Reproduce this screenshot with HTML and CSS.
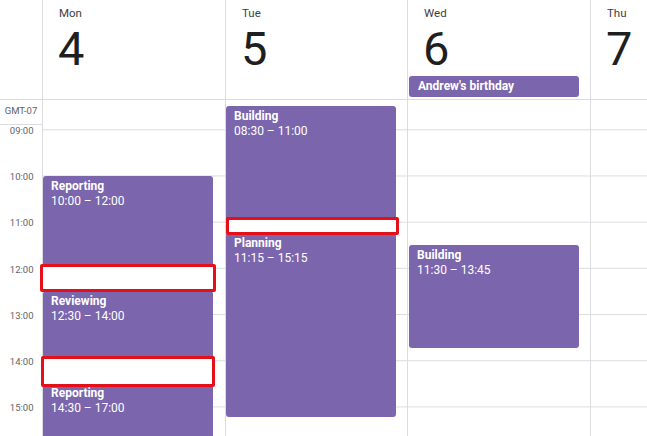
FILE: index.html
```html
<!DOCTYPE html>
<html>
<head>
<meta charset="utf-8">
<link rel="stylesheet" href="styles.css">
</head>
<body>
<div class="cal">
  <div class="head">
    <div class="gutter-head"></div>
    <div class="day-head w1"><div class="dname">Mon</div><div class="dnum">4</div></div>
    <div class="day-head w2"><div class="dname">Tue</div><div class="dnum">5</div></div>
    <div class="day-head w3"><div class="dname">Wed</div><div class="dnum">6</div><div class="allday">Andrew's birthday</div></div>
    <div class="day-head w4"><div class="dname">Thu</div><div class="dnum">7</div></div>
  </div>
  <div class="grid">
    <div class="gutter">
      <div class="gmt">GMT-07</div>
      <div class="hours">
        <div class="hl">09:00</div>
        <div class="hl">10:00</div>
        <div class="hl">11:00</div>
        <div class="hl">12:00</div>
        <div class="hl">13:00</div>
        <div class="hl">14:00</div>
        <div class="hl">15:00</div>
      </div>
    </div>
    <div class="col w1">
      <div class="ev r12" style="top:75.5px;height:91.4px"><b>Reporting</b>10:00 – 12:00</div>
      <div class="ev r12" style="top:191px;height:68.3px"><b>Reviewing</b>12:30 – 14:00</div>
      <div class="ev r12" style="top:283.4px;height:114.5px"><b>Reporting</b>14:30 – 17:00</div>
      <div class="mark" style="left:-3px;top:163.5px;width:176px;height:28px"></div>
      <div class="mark" style="left:-2px;top:256px;width:174px;height:31px"></div>
    </div>
    <div class="col w2">
      <div class="ev" style="top:6.2px;height:114.5px"><b>Building</b>08:30 – 11:00</div>
      <div class="ev" style="top:133.3px;height:183.8px"><b>Planning</b>11:15 – 15:15</div>
      <div class="mark" style="left:0;top:116.7px;width:172.5px;height:18.5px"></div>
    </div>
    <div class="col w3">
      <div class="ev l1" style="top:144.8px;height:103px"><b>Building</b>11:30 – 13:45</div>
    </div>
    <div class="col w4"></div>
  </div>
</div>
</body>
</html>
```

FILE: styles.css
```css
html, body {
  margin: 0;
  padding: 0;
  background: #fff;
}
body {
  width: 647px;
  height: 436px;
  overflow: hidden;
  font-family: Roboto, "Noto Sans", Arial, sans-serif;
  color: #202124;
}
.cal {
  width: 647px;
  height: 436px;
  display: flex;
  flex-direction: column;
}
.head {
  display: flex;
  height: 99px;
  border-bottom: 1px solid #dadce0;
  flex: none;
}
.gutter-head, .gutter {
  width: 42px;
  border-right: 1px solid #dadce0;
  flex: none;
}
.w1 { width: 182px; flex: none; border-right: 1px solid #dadce0; }
.w2 { width: 181px; flex: none; border-right: 1px solid #dadce0; }
.w3 { width: 182px; flex: none; border-right: 1px solid #dadce0; }
.w4 { flex: 1; }
.day-head {
  display: flex;
  flex-direction: column;
}
.dname {
  margin-top: 7.25px;
  padding-left: 16px;
  font-size: 11.5px;
  line-height: 13.5px;
  color: #3c4043;
}
.dnum {
  padding-left: 15px;
  font-size: 47px;
  line-height: 55px;
  color: #1f1f1f;
}
.allday {
  margin: auto 11px 3px 1px;
  height: 21px;
  line-height: 21px;
  padding-left: 9px;
  background: #7b65ad;
  color: #fff;
  font-size: 12px;
  font-weight: 700;
  border-radius: 3px;
}
.grid {
  flex: 1;
  display: flex;
  overflow: hidden;
}
.gmt {
  height: 24px;
  line-height: 22px;
  border-bottom: 1px solid #dadce0;
  font-size: 9.5px;
  color: #5f6368;
  text-align: center;
}
.hl {
  height: 46.2px;
  line-height: 12px;
  font-size: 9.5px;
  color: #5f6368;
  text-align: right;
  padding-right: 8.5px;
}
.col {
  position: relative;
  background-image: linear-gradient(to bottom, #dadce0 0, #dadce0 1px, transparent 1px);
  background-size: 100% 46.2px;
  background-position: 0 29.3px;
}
.ev {
  position: absolute;
  left: 0;
  right: 11px;
  box-sizing: border-box;
  padding: 3px 8px;
  background: #7b65ad;
  color: #fff;
  border-radius: 3px;
  font-size: 12px;
  line-height: 15px;
  overflow: hidden;
}
.ev.r12 { right: 12px; }
.ev.l1 { left: 1px; }
.ev b {
  display: block;
  font-weight: 700;
}
.mark {
  position: absolute;
  box-sizing: border-box;
  border: 3px solid #e3101a;
  border-radius: 2px;
  background: #fff;
  z-index: 2;
}
```
